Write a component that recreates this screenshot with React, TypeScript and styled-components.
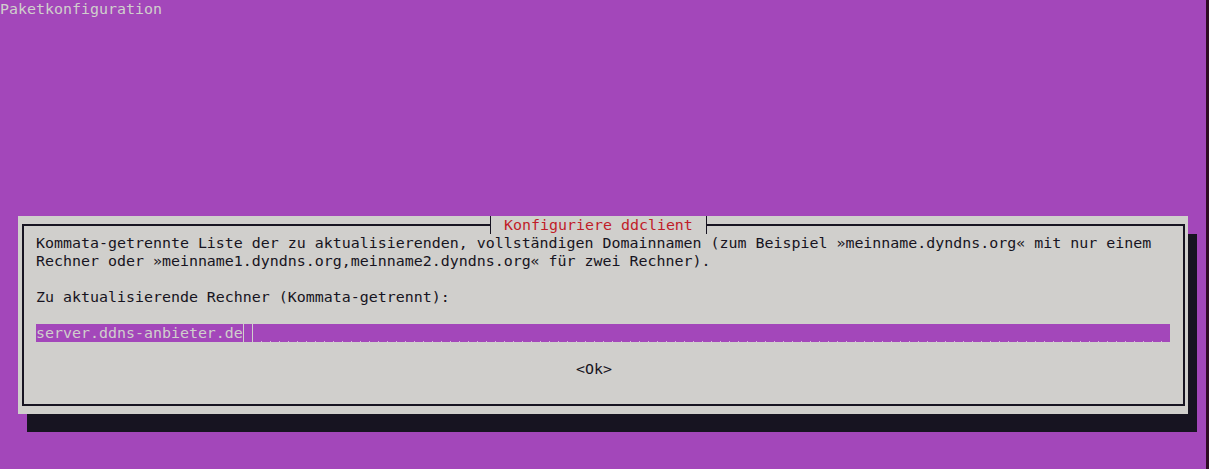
import styled, { createGlobalStyle } from 'styled-components';

const GlobalStyle = createGlobalStyle`
  html, body {
    margin: 0;
    padding: 0;
    background: #a347ba;
  }
`;

export default function App() {
  return (
    <>
      <GlobalStyle />
      <Screen>
        <Terminal>
          <BackTitle>Paketkonfiguration</BackTitle>
          <Dialog>
            <Title>Konfiguriere ddclient</Title>
            <Frame>
              <Line>
                Kommata-getrennte Liste der zu aktualisierenden, vollständigen Domainnamen (zum
                Beispiel »meinname.dyndns.org« mit nur einem
              </Line>
              <Line>Rechner oder »meinname1.dyndns.org,meinname2.dyndns.org« für zwei Rechner).</Line>
              <Line />
              <Line>Zu aktualisierende Rechner (Kommata-getrennt):</Line>
              <Line />
              <Input>
                <Value>server.ddns-anbieter.de</Value>
                <Cursor />
                <Fill />
              </Input>
              <Line />
              <Button>&lt;Ok&gt;</Button>
            </Frame>
          </Dialog>
        </Terminal>
        <Edge />
      </Screen>
    </>
  );
}

const Screen = styled.div`
  display: flex;
  height: 469px;
  overflow: hidden;
`;

const Terminal = styled.div`
  flex: 1;
  background: #a347ba;
  color: #d0cfcc;
  font-family: 'DejaVu Sans Mono', 'Liberation Mono', monospace;
  font-size: 14.95px;
  line-height: 18px;
`;

const Edge = styled.div`
  width: 3px;
  background: #300a24;
`;

const BackTitle = styled.div`
  height: 18px;
  white-space: pre;
`;

const Dialog = styled.div`
  position: relative;
  box-sizing: border-box;
  width: 1170px;
  height: 198px;
  margin: 198px 0 0 18px;
  padding: 8px 3px 8px 4px;
  background: #d0cfcc;
  box-shadow: 9px 18px 0 0 #171421;
  color: #171421;
`;

const Title = styled.div`
  position: absolute;
  top: 0;
  left: 472px;
  height: 18px;
  padding: 0 13px;
  border-left: 1px solid #171421;
  border-right: 1px solid #171421;
  background: #d0cfcc;
  color: #c01c28;
  white-space: pre;
`;

const Frame = styled.div`
  box-sizing: border-box;
  height: 100%;
  padding: 8px 0 0 12px;
  border: 2px solid #171421;
`;

const Line = styled.div`
  height: 18px;
  white-space: pre;
`;

const Input = styled.div`
  display: flex;
  width: 1134px;
  height: 18px;
  background: #a347ba;
  color: #d0cfcc;
`;

const Value = styled.span`
  white-space: pre;
`;

const Cursor = styled.span`
  box-sizing: border-box;
  width: 10px;
  height: 18px;
  border-left: 1px solid #d0cfcc;
  border-right: 1px solid #d0cfcc;
`;

const Fill = styled.span`
  flex: 1;
  background-image: linear-gradient(to right, transparent 8px, #d9b0e3 8px, #d9b0e3 9px, transparent 9px);
  background-size: 9px 1px;
  background-repeat: repeat-x;
  background-position: 0 100%;
`;

const Button = styled.div`
  height: 18px;
  margin-left: 540px;
  white-space: pre;
`;
